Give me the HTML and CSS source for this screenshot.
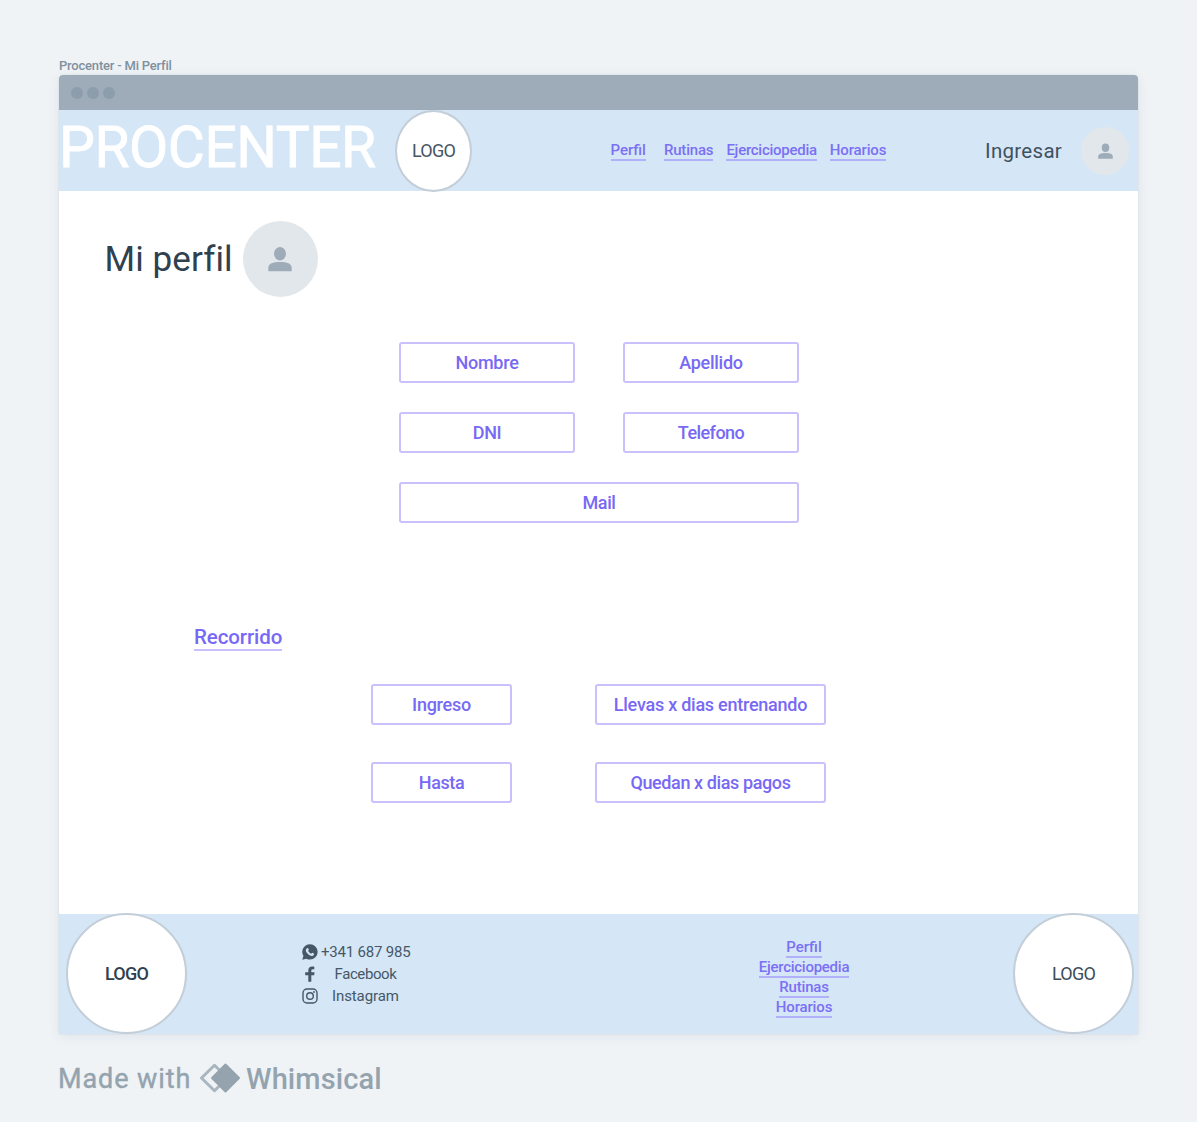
FILE: index.html
```
<!DOCTYPE html>
<html lang="es">
<head>
<meta charset="utf-8">
<title>Procenter - Mi Perfil</title>
<link rel="stylesheet" href="styles.css">
</head>
<body>
<main class="board">
  <div class="caption">Procenter - Mi Perfil</div>
  <section class="window">
    <div class="titlebar"><i class="dot"></i><i class="dot"></i><i class="dot"></i></div>
    <header class="header">
      <h1 class="brand">PROCENTER</h1>
      <div class="logo logo-top">LOGO</div>
      <nav class="nav">
        <a class="link nav-perfil">Perfil</a>
        <a class="link nav-rutinas">Rutinas</a>
        <a class="link nav-ejercicio">Ejerciciopedia</a>
        <a class="link">Horarios</a>
      </nav>
      <span class="login">Ingresar</span>
      <div class="avatar avatar-small">
        <svg viewBox="0 0 24 24"><ellipse cx="12" cy="6.7" rx="6" ry="6.7"/><path d="M.3 24.200v-3.200C.3 16.500 5 15 12 15s11.700 1.500 11.700 6v3.200z"/></svg>
      </div>
    </header>
    <div class="content">
      <div class="heading">
        <h2 class="title">Mi perfil</h2>
        <div class="avatar avatar-large">
          <svg viewBox="0 0 24 24"><ellipse cx="12" cy="6.7" rx="6" ry="6.7"/><path d="M.3 24.200v-3.200C.3 16.500 5 15 12 15s11.700 1.500 11.700 6v3.200z"/></svg>
        </div>
      </div>
      <div class="fields">
        <div class="field">Nombre</div>
        <div class="field">Apellido</div>
        <div class="field tight">DNI</div>
        <div class="field tighter">Telefono</div>
        <div class="field wide tight">Mail</div>
      </div>
      <a class="history-link">Recorrido</a>
      <div class="history">
        <div class="field">Ingreso</div>
        <div class="field">Llevas x dias entrenando</div>
        <div class="field tight">Hasta</div>
        <div class="field tight">Quedan x dias pagos</div>
      </div>
    </div>
    <footer class="footer">
      <div class="logo logo-bottom strong">LOGO</div>
      <ul class="contacts">
        <li>
          <svg viewBox="0 0 16 16"><path fill="currentColor" d="M8 .3a7.600 7.600 0 0 1 0 15.300 7.800 7.800 0 0 1-3.600-.9L.3 15.800l1.100-4A7.600 7.600 0 0 1 8 .3z"/><path fill="#d5e6f6" d="M5.500 4c.4 0 .6.200.8.600l.5 1.200c.1.400-.5.900-.6 1.200.7 1.300 1.600 2.100 2.900 2.700.4-.2.800-1.100 1.200-1l1.500.8c.5.300.1 1.400-.4 1.900-1 .8-2.500.5-3.700-.1-1.700-.9-3-2.300-3.700-3.800C3.500 6 4.200 4.200 5.500 4z"/></svg>
          <span class="phone">+341 687 985</span>
        </li>
        <li>
          <svg viewBox="0 0 16 16"><path fill="currentColor" d="M6.300 15.700V9.200H3.200V6.300h3.100V4.300C6.300 1.800 7.800.5 10 .5c1.200 0 2.300.2 2.300.2v2.500H11c-1.300 0-1.700.8-1.700 1.600v1.500h3.300l-.5 2.900H9.300v6.500z"/></svg>
          <span class="facebook">Facebook</span>
        </li>
        <li>
          <svg viewBox="0 0 16 16" fill="none" stroke="currentColor" stroke-width="1.400"><rect x="1" y="1" width="14" height="14" rx="4"/><circle cx="8" cy="8" r="3.300"/><circle cx="12" cy="4" r=".9" fill="currentColor" stroke="none"/></svg>
          <span class="instagram">Instagram</span>
        </li>
      </ul>
      <nav class="footer-nav">
        <a class="link nav-perfil">Perfil</a>
        <a class="link nav-ejercicio">Ejerciciopedia</a>
        <a class="link nav-rutinas">Rutinas</a>
        <a class="link">Horarios</a>
      </nav>
      <div class="logo logo-bottom">LOGO</div>
    </footer>
  </section>
  <div class="credit">
    <span class="made">Made with</span>
    <svg class="mark" viewBox="0 0 42 30"><path d="M15.500 2.300 2.500 15l13 12.700L28.500 15z" fill="none" stroke="#a9b5bf" stroke-width="3" stroke-linejoin="round"/><path d="M26.500 1.500 13 15l13.500 13.500L40 15z" fill="#94a3ae" stroke="#94a3ae" stroke-width="2" stroke-linejoin="round"/></svg>
    <span class="name">Whimsical</span>
  </div>
</main>
</body>
</html>
```
FILE: styles.css
```
* { box-sizing: border-box; }

body {
  margin: 0;
  background: #eff3f6;
  color: #2f404f;
  font-family: Roboto, "Liberation Sans", sans-serif;
}

h1, h2, ul { margin: 0; padding: 0; font-weight: 400; }

.board { width: 1197px; height: 1122px; padding: 57px 59px 0; }

.caption {
  height: 18px;
  line-height: 18px;
  font-size: 13px;
  font-weight: 500;
  letter-spacing: -.2px;
  color: #7f909e;
}

.window {
  height: 959px;
  border-radius: 4px 4px 0 0;
  background: #fff;
  box-shadow: 0 0 0 .5px rgba(60, 80, 100, .08), 0 2px 12px rgba(60, 80, 100, .09);
}

.titlebar {
  display: flex;
  align-items: center;
  gap: 4px;
  height: 35px;
  padding-left: 12px;
  border-radius: 4px 4px 0 0;
  background: #9dacb8;
}

.dot { width: 12px; height: 12px; border-radius: 50%; background: #8c9dab; }

.header {
  display: flex;
  align-items: center;
  height: 81px;
  background: #d5e6f6;
}

.brand {
  width: 336px;
  height: 81px;
  line-height: 75px;
  font-size: 57px;
  letter-spacing: -.5px;
  color: #fff;
  -webkit-text-stroke: .8px #fff;
}

.logo {
  display: flex;
  flex: none;
  align-items: center;
  justify-content: center;
  border: 2px solid #c3ced8;
  border-radius: 50%;
  background: #fff;
  font-size: 18px;
  letter-spacing: -.8px;
}

.logo-top { width: 77px; height: 82px; color: #455664; }
.strong { font-weight: 500; }

.nav { display: flex; width: 276px; margin-left: 138.5px; }

.link {
  height: 19px;
  line-height: 17px;
  border-bottom: 2px solid #b1b0fa;
  font-size: 15px;
  font-weight: 500;
  letter-spacing: -.15px;
  color: #7b70f5;
}

.nav .link { height: 20px; line-height: 18px; }
.nav .nav-perfil { margin-right: 18px; }
.nav .nav-rutinas { margin-right: 13px; }
.nav .nav-ejercicio { margin-right: 13px; }
.nav-perfil { letter-spacing: 0; }
.nav-rutinas { letter-spacing: -.18px; }
.nav-ejercicio { letter-spacing: -.26px; }

.login {
  width: 96px;
  margin-left: 98.5px;
  font-size: 20.5px;
  letter-spacing: .3px;
  color: #3f515f;
}

.avatar {
  display: flex;
  flex: none;
  align-items: center;
  justify-content: center;
  border-radius: 50%;
  background: #e2e7eb;
}

.avatar svg { overflow: visible; fill: #9dacb8; }
.avatar-small { width: 48px; height: 48px; }
.avatar-small svg { width: 15px; height: 16px; }
.avatar-large { width: 75px; height: 76px; }
.avatar-large svg { width: 24px; height: 24px; }

.content { height: 723px; padding-top: 30px; }

.heading { display: flex; align-items: center; height: 76px; padding-left: 45.5px; }

.title { width: 138px; font-size: 35px; letter-spacing: .1px; }

.fields {
  display: grid;
  grid-template-columns: 176px 176px;
  grid-auto-rows: 41px;
  gap: 29px 48px;
  margin: 45px 0 0 340px;
}

.field {
  display: flex;
  align-items: center;
  justify-content: center;
  border: 2px solid #c8c1fc;
  border-radius: 3px;
  font-size: 18px;
  font-weight: 500;
  letter-spacing: -.25px;
  color: #7869f5;
}

.wide { grid-column: span 2; }
.tight { letter-spacing: -.4px; }
.tighter { letter-spacing: -.55px; }

.history-link {
  display: block;
  width: max-content;
  margin: 102px 0 0 135px;
  border-bottom: 2px solid #c8c1fc;
  font-size: 20.5px;
  line-height: 24px;
  font-weight: 500;
  letter-spacing: -.1px;
  color: #7869f5;
}

.history {
  display: grid;
  grid-template-columns: 141px 231px;
  grid-auto-rows: 41px;
  gap: 37px 83px;
  margin: 33px 0 0 312px;
}

.footer {
  display: flex;
  align-items: center;
  height: 120px;
  padding-left: 7px;
  background: #d5e6f6;
}

.logo-bottom { width: 121px; height: 121px; margin-top: -1px; }

.contacts {
  width: 300px;
  margin-left: 115px;
  list-style: none;
  font-size: 15px;
  color: #455867;
}

.contacts li { display: flex; align-items: center; height: 22px; }
.contacts svg { width: 16px; height: 16px; }
.phone { margin-left: 3px; letter-spacing: -.2px; }
.facebook { margin-left: 16.5px; letter-spacing: -.4px; }
.instagram { margin-left: 14px; letter-spacing: -.1px; }

.footer-nav {
  display: flex;
  flex-direction: column;
  align-items: center;
  gap: 1px;
  width: 120px;
  margin-left: 142px;
  margin-right: 149px;
  padding-top: 9px;
}

.footer-nav + .logo { color: #3c4d5a; }

.credit {
  display: flex;
  align-items: center;
  height: 30px;
  margin-top: 29px;
  color: #94a3ae;
}

.made {
  width: 138px;
  margin-left: -1px;
  padding-top: 1px;
  font-size: 27px;
  letter-spacing: .9px;
  white-space: nowrap;
  -webkit-text-stroke: .4px #94a3ae;
}

.mark { width: 42px; height: 30px; margin-left: 3px; }
.name { margin-left: 5px; padding-top: 1px; font-size: 29px; font-weight: 500; letter-spacing: .1px; }
```
